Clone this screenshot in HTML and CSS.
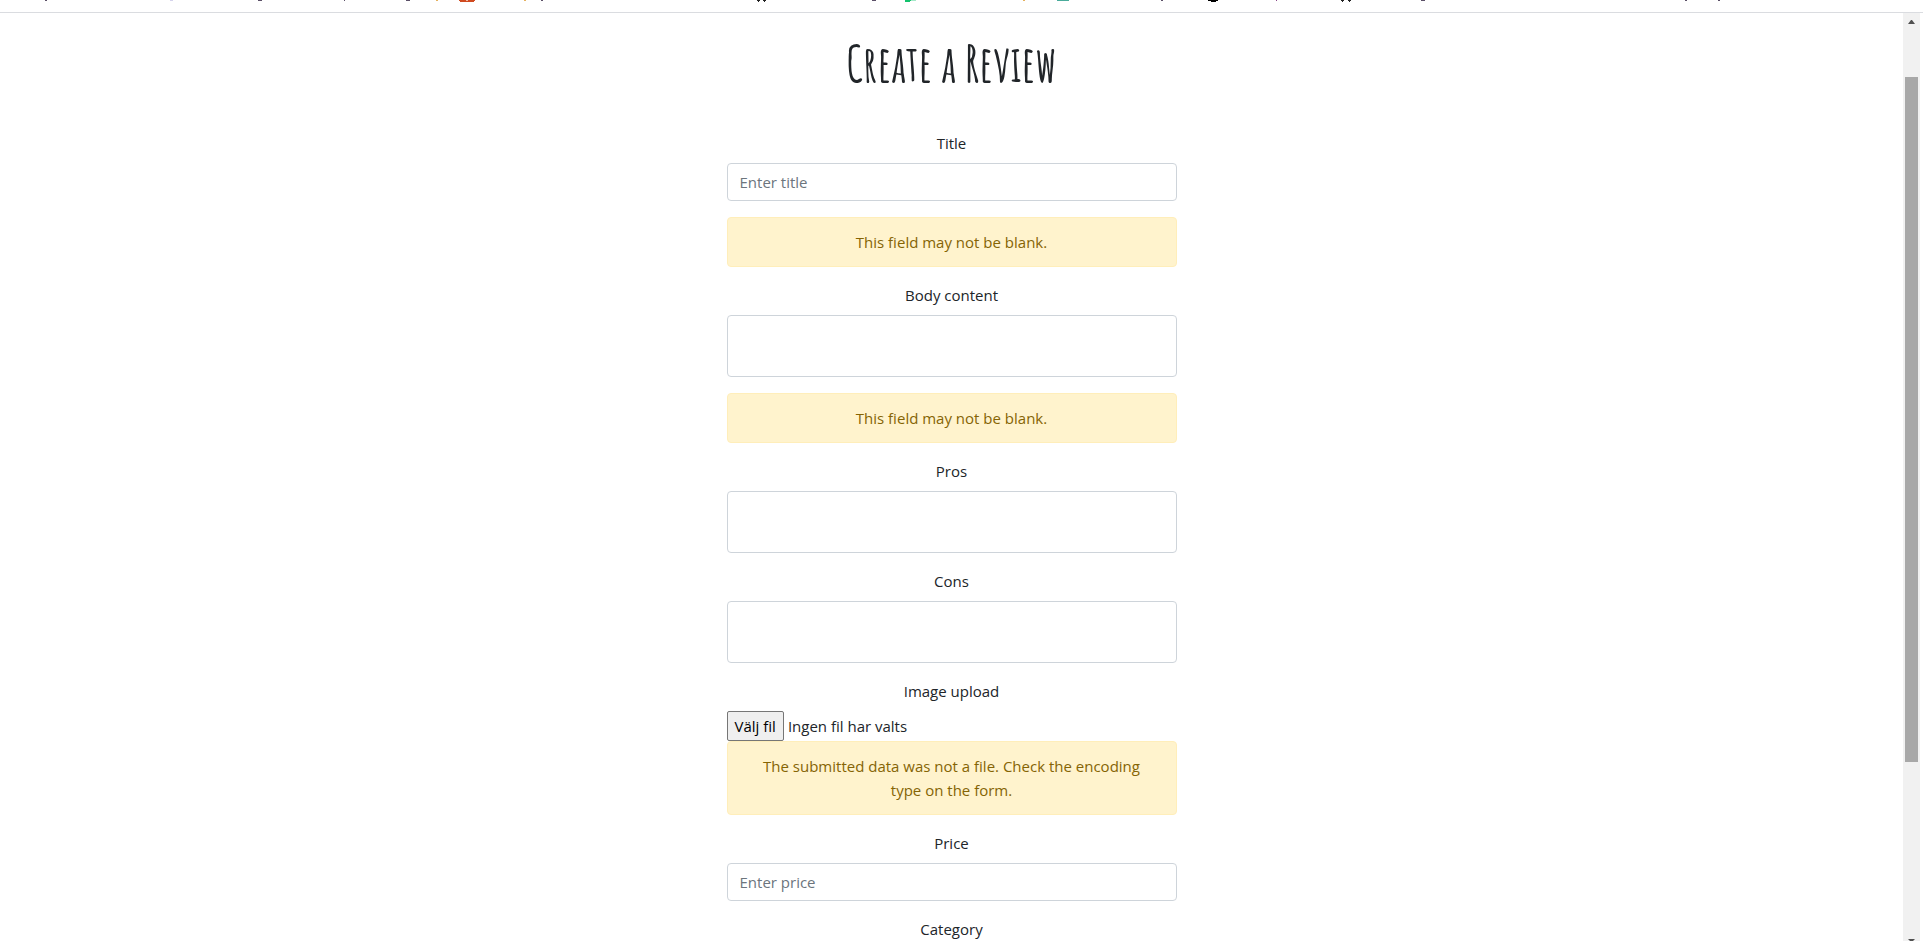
FILE: index.html
```
<!DOCTYPE html>
<html lang="en">
<head>
<meta charset="utf-8">
<title>Create a Review</title>
<link rel="stylesheet" href="styles.css">
</head>
<body>
<header class="bookmarks" aria-hidden="true">
  <svg class="bookmark-edges" width="1920" height="3" viewBox="0 0 1920 3" shape-rendering="crispEdges">
    <path fill="#5b5068" d="M45 0h2v1h-2zM258 0h4v1h-4zM344 0h1v1h-1zM406 0h4v1h-4zM541 0h2v1h-2zM872 0h4v1h-4zM1161 0h2v1h-2zM1421 0h4v1h-4zM1685 0h2v1h-2zM1718 0h2v1h-2z"/>
    <path fill="#d5d3ec" d="M170 0h3v1h-3z"/>
    <path fill="#e5b15f" d="M436 0h2v1h-2zM524 0h2v1h-2zM1023 0h2v1h-2z"/>
    <path fill="#d04a20" d="M459 0h16v1h-1v1h-14v-1h-1z"/>
    <path fill="#f0b8a4" d="M466 0h2v1h-2z"/>
    <path fill="#222" d="M757 0h3v1h-1v1h-1v-1h-1zM763 0h3v1h-1v1h-1v-1h-1zM1341 0h3v1h-1v1h-1v-1h-1zM1348 0h3v1h-1v1h-1v-1h-1z"/>
    <path fill="#13c26d" d="M905 0h7v1h-2v1h-5z"/>
    <path fill="#a5e8c8" d="M912 0h4v1h-6z"/>
    <path fill="#4aab9b" d="M1057 0h12v1h-12z"/>
    <path fill="#000" d="M1208 0h10v1h-2v1h-5v-1h-3z"/>
    <path fill="#8b4789" d="M1276 0h1v1h-1z"/>
  </svg>
</header>
<div class="viewport">
  <main class="page">
    <h1 class="heading">Create a Review</h1>
    <form class="review-form">
      <div class="group">
        <label class="label" for="title">Title</label>
        <input class="control" id="title" type="text" placeholder="Enter title">
      </div>
      <div class="alert" role="alert">This field may not be blank.</div>
      <div class="group">
        <label class="label" for="content">Body content</label>
        <textarea class="control area" id="content" rows="2"></textarea>
      </div>
      <div class="alert" role="alert">This field may not be blank.</div>
      <div class="group">
        <label class="label" for="pros">Pros</label>
        <textarea class="control area" id="pros" rows="2"></textarea>
      </div>
      <div class="group">
        <label class="label" for="cons">Cons</label>
        <textarea class="control area" id="cons" rows="2"></textarea>
      </div>
      <div class="group upload">
        <label class="label" for="image">Image upload</label>
        <div class="file">
          <input class="file-input" id="image" type="file">
          <label class="file-button" for="image">Välj fil</label>
          <span class="file-name">Ingen fil har valts</span>
        </div>
      </div>
      <div class="alert" role="alert">The submitted data was not a file. Check the encoding type on the form.</div>
      <div class="group">
        <label class="label" for="price">Price</label>
        <input class="control" id="price" type="text" placeholder="Enter price">
      </div>
      <div class="group">
        <label class="label" for="category">Category</label>
        <select class="control" id="category"><option></option></select>
      </div>
    </form>
  </main>
  <div class="scrollbar" aria-hidden="true">
    <svg class="arrow" width="7" height="4" viewBox="0 0 7 4"><path fill="#505050" d="M0 4 3 0h1l3 4z"/></svg>
    <div class="track"><div class="thumb"></div></div>
    <svg class="arrow" width="7" height="2" viewBox="0 0 7 2"><path fill="#505050" d="M0 0h7L5 2H2z"/></svg>
  </div>
</div>
</body>
</html>
```
FILE: styles.css
```
* { box-sizing: border-box; }

body {
  margin: 0;
  height: 100vh;
  display: flex;
  flex-direction: column;
  overflow: hidden;
  background: #fff;
  color: #212529;
  font: 15px/24px "Open Sans", "Noto Sans", sans-serif;
}

.bookmarks {
  flex: none;
  height: 13px;
  overflow: hidden;
  border-bottom: 1px solid #dadce0;
}
.bookmark-edges { display: block; }

.viewport {
  flex: 1;
  min-height: 0;
  display: flex;
  padding-right: 3px;
}

.page {
  flex: 1;
  min-width: 0;
  overflow: hidden;
  padding: 20px 16px 0;
  text-align: center;
}

.heading {
  margin: 0 0 38px;
  font: bold 49px/60px "Amatic SC", Roboto, sans-serif;
}

.review-form {
  max-width: 450px;
  margin: 0 auto;
}

.group { margin-bottom: 16px; }
.upload { margin-bottom: 0; }

.label {
  display: block;
  margin-bottom: 8px;
}

.control {
  display: block;
  width: 100%;
  height: 38px;
  padding: 6px 12px;
  border: 1px solid #ced4da;
  border-radius: 4px;
  background: #fff;
  color: #495057;
  font: inherit;
}
.control::placeholder { color: #6c757d; opacity: 1; }

.area {
  height: 62px;
  resize: none;
  overflow: auto;
}

.alert {
  margin-bottom: 16px;
  padding: 12px 20px;
  border: 1px solid #ffeeba;
  border-radius: 4px;
  background: #fff3cd;
  color: #856404;
}

.file {
  position: relative;
  display: flex;
  align-items: center;
  gap: 4px;
}
.file-input {
  position: absolute;
  width: 1px;
  height: 1px;
  opacity: 0;
}
.file-button {
  padding: 2px 7px;
  border: 1px solid #767676;
  border-radius: 2px;
  background: #efefef;
  color: #000;
}

.scrollbar {
  flex: none;
  width: 17px;
  padding: 7px 2px 0;
  display: flex;
  flex-direction: column;
  align-items: center;
  background: #f1f1f1;
}
.arrow { flex: none; display: block; }
.track {
  flex: 1;
  width: 100%;
  padding: 53px 0 177px;
  display: flex;
}
.thumb { flex: 1; background: #a8a8a8; }
```
